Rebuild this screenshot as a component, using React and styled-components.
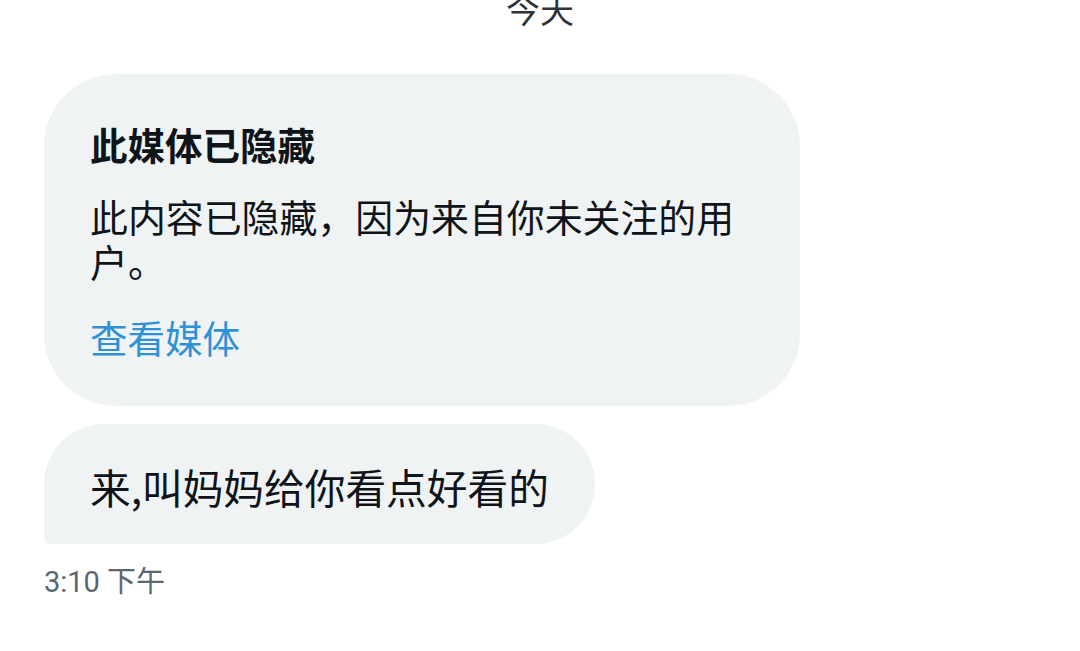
import styled, { createGlobalStyle } from "styled-components";

const GlobalStyle = createGlobalStyle`
    html, body {
        margin: 0;
        padding: 0;
        background: #ffffff;
        overflow: hidden;
    }

    body {
        font-family: "Noto Sans CJK SC", "Noto Sans", "Liberation Sans", sans-serif;
        color: #0f1419;
    }
`

const App = function () {
    return (
        <>
            <GlobalStyle />
            <Conversation>
                <DayLabel>今天</DayLabel>
                <MessageList>
                    <Bubble $wide>
                        <HiddenTitle>此媒体已隐藏</HiddenTitle>
                        <HiddenText>此内容已隐藏，因为来自你未关注的用户。</HiddenText>
                        <ViewLink href="#">查看媒体</ViewLink>
                    </Bubble>
                    <Bubble $last>
                        <MessageText>来,叫妈妈给你看点好看的</MessageText>
                    </Bubble>
                </MessageList>
                <Timestamp>3:10 下午</Timestamp>
            </Conversation>
        </>
    )
}

export default App;

const Conversation = styled.div`
    width: 1080px;
    height: 651px;
    box-sizing: border-box;
    padding: 0 44px;
    display: flex;
    flex-direction: column;
`

const DayLabel = styled.div`
    margin-top: -11px;
    height: 40px;
    line-height: 40px;
    text-align: center;
    font-size: 34px;
    color: #2f3337;
`

const MessageList = styled.div`
    margin-top: 45px;
    display: flex;
    flex-direction: column;
    align-items: flex-start;
    gap: 18px;
`

const Bubble = styled.div`
    box-sizing: border-box;
    background: #eff3f4;
    width: ${props => props.$wide ? '756px' : 'auto'};
    padding: ${props => props.$wide ? '47px 46px 47px' : '39px 46px 33px'};
    border-radius: ${props => props.$last ? '60px 60px 60px 6px' : '72px'};
    display: flex;
    flex-direction: column;
`

const HiddenTitle = styled.div`
    font-size: 37.5px;
    line-height: 45px;
    font-weight: 700;
    color: #0f1419;
`

const HiddenText = styled.div`
    margin-top: 27px;
    font-size: 37.9px;
    line-height: 45px;
    color: #0f1419;
`

const ViewLink = styled.a`
    margin-top: 31px;
    font-size: 37.5px;
    line-height: 45px;
    color: #2d91d8;
    text-decoration: none;
`

const MessageText = styled.div`
    font-size: 40.7px;
    line-height: 48px;
    color: #0f1419;
    white-space: nowrap;
`

const Timestamp = styled.div`
    margin-top: 22px;
    font-family: "Roboto", "Noto Sans CJK SC", sans-serif;
    font-size: 29px;
    line-height: 33px;
    color: #5b6770;
`
